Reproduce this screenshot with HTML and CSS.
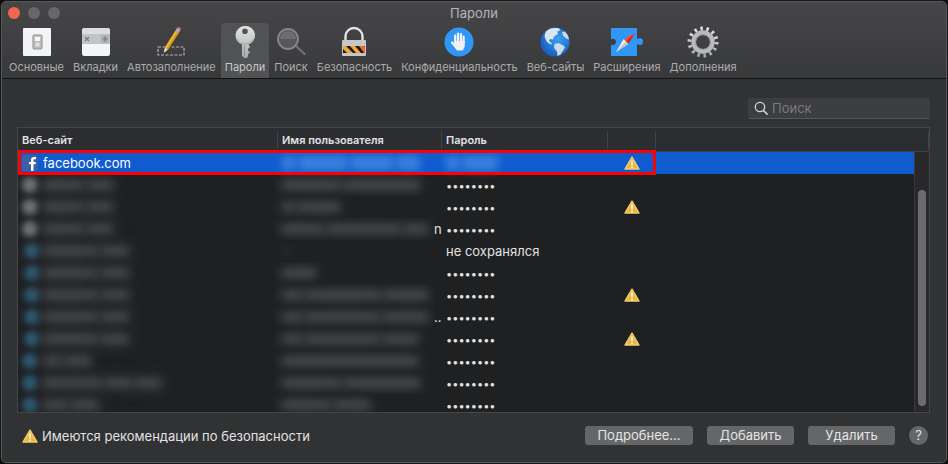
FILE: index.html
```html
<!DOCTYPE html>
<html lang="ru">
<head>
    <meta charset="UTF-8">
    <meta name="viewport" content="width=device-width, initial-scale=1.0">
    <title>Пароли</title>
    <link rel="stylesheet" href="styles.css">
</head>
<body>
    <div class="window">
        <header class="top">
            <div class="titlebar">
                <div class="lights">
                    <button type="button" class="light close" aria-label="Закрыть"></button>
                    <button type="button" class="light" aria-label="Свернуть"></button>
                    <button type="button" class="light" aria-label="Развернуть"></button>
                </div>
                <h1>Пароли</h1>
            </div>
            <nav class="toolbar">
                <button type="button" class="tab">
                    <svg class="icon" viewBox="0 0 32 32">
                        <rect x="2" y="2" width="28" height="28" rx="1" fill="#f3f4f5"/>
                        <rect x="12" y="9" width="9" height="14" rx="1" fill="#c4c4c4" stroke="#8d8d8d"/>
                        <rect x="14" y="11" width="5" height="4" fill="#f6f6f6"/>
                        <rect x="14" y="16" width="5" height="5" fill="#e2e2e2" stroke="#a3a3a3" stroke-width=".6"/>
                    </svg>
                    <span>Основные</span>
                </button>
                <button type="button" class="tab">
                    <svg class="icon" viewBox="0 0 32 32">
                        <rect x="2" y="2" width="28" height="28" rx="2.5" fill="#f4f5f8"/>
                        <path d="M2 8V4.500A2.500 2.500 0 0 1 4.500 2h23A2.500 2.500 0 0 1 30 4.500V8z" fill="#dcdde0"/>
                        <rect x="2" y="8" width="28" height="10" fill="#c2c3c6"/>
                        <rect x="21" y="9" width="8" height="8" fill="#b0b1b4"/>
                        <path d="M5 11l4 4M9 11l-4 4M25 10.500v5M22.500 13h5" stroke="#77787b" stroke-width="1.2" fill="none"/>
                    </svg>
                    <span>Вкладки</span>
                </button>
                <button type="button" class="tab">
                    <svg class="icon" viewBox="0 0 32 32">
                        <rect x="3" y="21" width="26" height="8" fill="none" stroke="#b4b4b4" stroke-width="1.2" stroke-dasharray="3 1.5"/>
                        <path d="M20.500 4.500l3.500 2L13 23.500l-3.200-1.900z" fill="#efb733"/>
                        <path d="M22.500 5.600l1.500.9L13 23.500l-1.400-.9z" fill="#d4961c"/>
                        <path d="M9.800 21.600l3.200 1.900-4.500 4z" fill="#ead9b6"/>
                        <path d="M8.900 25.700l1.200.7-1.600 1.100z" fill="#333"/>
                        <path d="M20.500 4.500l1.400-2.400 3.500 2-1.400 2.400z" fill="#aeb4bd"/>
                        <path d="M21.900 2.100c1.200-2.300 5-.3 3.500 2z" fill="#d9706a"/>
                    </svg>
                    <span>Автозаполнение</span>
                </button>
                <button type="button" class="tab active">
                    <svg class="icon" viewBox="0 0 32 32">
                        <defs>
                            <linearGradient id="metal" x1="0" y1="0" x2="0" y2="1">
                                <stop offset="0" stop-color="#e4e4e4"/>
                                <stop offset="1" stop-color="#a9abad"/>
                            </linearGradient>
                        </defs>
                        <path fill-rule="evenodd" fill="url(#metal)" d="M16 0a9.500 9.500 0 0 0-3 18.500V30l2.500 2H18l1-2v-2l2-1.500-2-2V23l2-2-1.500-2.500A9.500 9.500 0 0 0 16 0zm0 2.500a2.800 2.800 0 1 1 0 5.600 2.800 2.800 0 0 1 0-5.600z"/>
                        <path d="M15.500 19v12" stroke="#8e9092" stroke-width="1"/>
                        <path d="M8 13a9 9 0 0 0 16 0" fill="none" stroke="#9c9ea0" stroke-width=".8"/>
                    </svg>
                    <span>Пароли</span>
                </button>
                <button type="button" class="tab">
                    <svg class="icon" viewBox="0 0 32 32">
                        <path d="M20 19l9.500 9" stroke="#707173" stroke-width="2.4" stroke-linecap="round"/>
                        <circle cx="13" cy="13" r="10" fill="#57585a" stroke="#858688" stroke-width="1.8"/>
                        <path d="M5 13a8 8 0 0 1 16 0z" fill="#6b6c6e"/>
                    </svg>
                    <span>Поиск</span>
                </button>
                <button type="button" class="tab">
                    <svg class="icon" viewBox="0 0 32 32">
                        <path d="M7.500 15v-4.500a8.500 8.500 0 0 1 17 0V15" fill="none" stroke="#e2e3e4" stroke-width="2.4"/>
                        <rect x="4" y="14" width="24" height="16" rx="1" fill="#c5c6c8"/>
                        <rect x="5" y="20" width="22" height="7" fill="#1c1a18"/>
                        <path d="M5 20h3l7 7H9l-4-4z" fill="#f2a63a"/>
                        <path d="M12 20h5l6 7h-5z" fill="#f2a63a"/>
                        <path d="M21 20h5l1 1v6h-1z" fill="#ee6b36"/>
                    </svg>
                    <span>Безопасность</span>
                </button>
                <button type="button" class="tab">
                    <svg class="icon" viewBox="0 0 32 32">
                        <circle cx="16" cy="16" r="14.5" fill="#2f97f5"/>
                        <g stroke="#f4f4f4" stroke-width="2.2" stroke-linecap="round">
                            <path d="M12.200 17V9.500M15 16V7.500M17.900 16V8M20.600 17v-6.500M12 20l-3-3.500"/>
                        </g>
                        <path d="M11 15h10.800v4.500c0 2-1.300 3-2 5h-6c-.5-1.500-2.800-3-2.800-5z" fill="#f0f0f0"/>
                    </svg>
                    <span>Конфиденциальность</span>
                </button>
                <button type="button" class="tab">
                    <svg class="icon" viewBox="0 0 32 32">
                        <defs>
                            <radialGradient id="ocean" cx=".6" cy=".4" r=".6">
                                <stop offset="0" stop-color="#39a0f4"/>
                                <stop offset="1" stop-color="#1c5fc0"/>
                            </radialGradient>
                        </defs>
                        <circle cx="16" cy="16" r="14.5" fill="url(#ocean)"/>
                        <path d="M7 5.500C10 2.500 14 1.500 18 2l3 1-1 2.500-2-.5 1 3-4 2.500-1 3-3-.5-1 2 3 2.500-1 1-4-2.500-2-4c-1-2 0-4.500 1-6.500z" fill="#dbe6ee"/>
                        <path d="M23 6l3-.5 3 4 1 4-3-1-3-3z" fill="#c6dcec"/>
                        <path d="M15.500 18l4-1 5 2.500 1.500 2-2 3-2.500 4-3 1.500-.5-4.500-3-3.500z" fill="#cadbe8"/>
                    </svg>
                    <span>Веб-сайты</span>
                </button>
                <button type="button" class="tab">
                    <svg class="icon" viewBox="0 0 32 32">
                        <path d="M0 2h26v11c1 0 1.500-1 3-1 4 0 4 7 0 7-1.500 0-2-1-3-1v12H0V18.500c1.500 1.500 5 .5 5-2.500s-3.500-4-5-2.500z" fill="#2f97f5"/>
                        <path d="M24 7l-6.600 10.900-4.800-4.800z" fill="#f1503a"/>
                        <path d="M24 7l-6.600 10.900L15 15.500z" fill="#c22c20"/>
                        <path d="M5 26l7.600-12.900 4.800 4.800z" fill="#eceeef"/>
                        <path d="M5 26l10-10.500 2.400 2.400z" fill="#bfc4c9"/>
                    </svg>
                    <span>Расширения</span>
                </button>
                <button type="button" class="tab">
                    <svg class="icon" viewBox="0 0 32 32">
                        <circle cx="16" cy="16" r="13.5" fill="none" stroke="url(#metal)" stroke-width="4" stroke-dasharray="2.4 3.66"/>
                        <circle cx="16" cy="16" r="9.4" fill="none" stroke="#b9babb" stroke-width="4.6"/>
                        <circle cx="16" cy="16" r="7.4" fill="none" stroke="#929394" stroke-width="1"/>
                    </svg>
                    <span>Дополнения</span>
                </button>
            </nav>
        </header>

        <main class="content">
            <label class="search">
                <svg viewBox="0 0 14 14">
                    <circle cx="6" cy="6" r="4.7" fill="none" stroke="#d6d6d7" stroke-width="1.3"/>
                    <path d="M9.500 9.500l3.600 3.600" stroke="#d6d6d7" stroke-width="1.5" stroke-linecap="round"/>
                </svg>
                <input type="search" placeholder="Поиск" aria-label="Поиск">
            </label>

            <div class="list">
                <table>
                    <colgroup>
                        <col class="col-site">
                        <col class="col-user">
                        <col class="col-pass">
                        <col class="col-warn">
                        <col>
                        <col class="col-scroll">
                    </colgroup>
                    <thead>
                        <tr><th>Веб-сайт</th><th>Имя пользователя</th><th>Пароль</th><th></th><th></th><th></th></tr>
                    </thead>
                    <tbody id="rows">
                        <tr class="selected">
                            <td>
                                <div class="site">
                                    <svg class="fb" viewBox="0 0 16 16">
                                        <rect width="16" height="16" rx="2" fill="#3c5fa6"/>
                                        <path d="M9 16V9.300h-2V7h2V5.200C9 3 10.300 2 12.200 2H14v2.300h-1.200c-1 0-1.300.5-1.300 1.300V7h2.400l-.4 2.300h-2V16z" fill="#fff"/>
                                    </svg>
                                    facebook.com
                                </div>
                            </td>
                            <td><div class="masked"><i style="width:14px"></i><i style="width:50px"></i><i style="width:44px"></i><i style="width:24px"></i></div></td>
                            <td><div class="masked"><i style="width:14px"></i><i style="width:36px"></i></div></td>
                            <td class="alert"><svg class="warn" viewBox="0 0 16 14"><use href="#warning"/></svg></td>
                            <td></td>
                            <td></td>
                        </tr>
                    </tbody>
                </table>
                <div class="marker"></div>
                <div class="thumb"></div>
            </div>

            <footer class="bottom">
                <p class="notice">
                    <svg class="warn" viewBox="0 0 16 14">
                        <g id="warning">
                            <path d="M8 1l7 12H1z" fill="#edb73c" stroke="#f3cd74" stroke-width="1.4" stroke-linejoin="round"/>
                            <path d="M8 4.500v4.700M8 10.600v1.500" stroke="#fff" stroke-width="1.5"/>
                        </g>
                    </svg>
                    Имеются рекомендации по безопасности
                </p>
                <button type="button" class="btn wide">Подробнее...</button>
                <button type="button" class="btn">Добавить</button>
                <button type="button" class="btn">Удалить</button>
                <button type="button" class="help" aria-label="Справка">?</button>
            </footer>
        </main>
    </div>

    <script>
        // word widths of the masked site and user name, then the rest of the row
        const rows = [
            { icon: "gray", site: [42, 26], user: [60, 76], tail: "" },
            { icon: "gray", site: [42, 26], user: [14, 42], warn: true },
            { icon: "gray", site: [42, 26], user: [44, 74, 24], tail: "n" },
            { icon: "blue in", site: [56, 28], user: [10], faint: true, pass: "не сохранялся" },
            { icon: "blue in", site: [56, 28], user: [34] },
            { icon: "blue in", site: [56, 28], user: [22, 76, 44], warn: true },
            { icon: "blue in", site: [56, 28], user: [22, 76, 44], tail: ".." },
            { icon: "blue in", site: [56, 28], user: [22, 76, 34], warn: true },
            { icon: "blue", site: [20, 26], user: [136] },
            { icon: "blue", site: [60, 28, 26], user: [60, 76] },
            { icon: "blue", site: [26, 28], user: [50, 36] }
        ];

        const masked = (widths) => widths.map((w) => `<i style="width:${w}px"></i>`).join("");

        document.getElementById("rows").insertAdjacentHTML("beforeend", rows.map((row) => `
            <tr>
                <td><div class="site"><b class="dot ${row.icon}"></b><div class="masked">${masked(row.site)}</div></div></td>
                <td><div class="user"><div class="masked${row.faint ? " faint" : ""}">${masked(row.user)}</div><span>${row.tail || ""}</span></div></td>
                <td>${row.pass || '<span class="dots">••••••••</span>'}</td>
                <td class="alert">${row.warn ? '<svg class="warn" viewBox="0 0 16 14"><use href="#warning"/></svg>' : ""}</td>
                <td></td>
                <td></td>
            </tr>`).join(""));
    </script>
</body>
</html>
```
FILE: styles.css
```css
* {
    box-sizing: border-box;
}
body {
    margin: 0;
    background-color: #0c0c0d;
    color: #e2e2e3;
    font-family: Inter, "Noto Sans", sans-serif;
    font-size: 13px;
}
button {
    font-family: inherit;
    border: none;
    padding: 0;
}
.window {
    display: flex;
    flex-direction: column;
    height: 100vh;
    min-height: 300px;
    padding: 1px;
    background-color: #313234;
    border: 1px solid #161617;
    border-radius: 6px;
    box-shadow: inset 0 0 0 1px #58595b;
    overflow: hidden;
}
.top {
    background: linear-gradient(#464648, #38393b);
    border-bottom: 1px solid #121213;
    border-radius: 5px 5px 0 0;
}
.titlebar {
    display: grid;
    grid-template-columns: 1fr auto 1fr;
    align-items: center;
    height: 21px;
    padding: 0 6px;
}
.titlebar h1 {
    margin: 0;
    font-size: 13px;
    line-height: 20px;
    font-weight: 400;
    color: #b6b6b8;
}
.lights {
    display: flex;
    gap: 8px;
}
.light {
    width: 12px;
    height: 12px;
    border-radius: 50%;
    background-color: #68686b;
}
.light.close {
    background-color: #f2654e;
}
.toolbar {
    display: flex;
    gap: 1px;
    padding: 0 3px;
}
.tab {
    display: flex;
    flex-direction: column;
    align-items: center;
    gap: 1px;
    height: 55px;
    padding: 3px 4px 0;
    background: none;
    border-radius: 4px 4px 0 0;
    color: #acacae;
    font-size: 11px;
    line-height: 16px;
}
.tab.active {
    background-color: #515254;
    color: #c8c8ca;
}
.icon {
    width: 32px;
    height: 32px;
}
.content {
    display: flex;
    flex: 1;
    flex-direction: column;
    min-height: 0;
    padding: 19px 16px 0 15px;
}
.search {
    display: flex;
    align-items: center;
    align-self: flex-end;
    gap: 4px;
    width: 182px;
    height: 21px;
    padding: 0 6px;
    background-color: #3d3e40;
    border-bottom: 1px solid #565759;
    border-radius: 3px;
}
.search svg {
    flex: none;
    width: 14px;
    height: 14px;
}
.search input {
    flex: 1;
    min-width: 0;
    padding: 0;
    background: none;
    border: none;
    outline: none;
    color: #e2e2e3;
    font: inherit;
}
.search input::placeholder {
    color: #7b7b7d;
}
.list {
    position: relative;
    flex: 1;
    min-height: 0;
    margin-top: 8px;
    background-color: #1f2022;
    border: 1px solid #454648;
    overflow: hidden;
}
table {
    width: 100%;
    table-layout: fixed;
    border-collapse: separate;
    border-spacing: 0;
}
.col-site {
    width: 260px;
}
.col-user {
    width: 164px;
}
.col-pass {
    width: 166px;
}
.col-warn {
    width: 48px;
}
.col-scroll {
    width: 15px;
}
th {
    height: 24px;
    padding: 0 4px;
    background: #2b2d31 linear-gradient(#414244, #414244) right center / 1px 18px no-repeat;
    border-bottom: 1px solid #3f4042;
    font-size: 11px;
    font-weight: 600;
    text-align: left;
}
th:nth-child(5) {
    background-image: none;
}
td {
    height: 22px;
    padding: 0 0 0 4px;
    line-height: 20px;
    white-space: nowrap;
}
td.alert {
    padding: 0;
}
td:last-child {
    background-color: #28292b;
    border-left: 1px solid #39393b;
}
.selected td:not(:last-child) {
    background-color: #105ccf;
    color: #fff;
}
.site,
.user {
    display: flex;
    align-items: center;
    gap: 5px;
    height: 20px;
}
.user {
    gap: 0;
}
.user .masked {
    width: 160px;
    margin-left: -8px;
    padding-left: 8px;
    overflow: hidden;
}
.user span {
    width: 8px;
    overflow: hidden;
}
.fb {
    width: 16px;
    height: 16px;
}
.dot {
    width: 16px;
    height: 16px;
    border-radius: 50%;
    background-color: #727375;
    filter: blur(3px);
}
.dot.blue {
    background-color: #2d5870;
}
.dot.in {
    margin: 0 -2px 0 2px;
}
.masked {
    display: flex;
    align-items: center;
    gap: 2px;
    height: 22px;
}
.masked i {
    height: 8px;
    border-radius: 4px;
    background-color: #4b4c4e;
    box-shadow: 0 0 8px 6px rgba(56, 57, 63, 0.4);
    filter: blur(4px);
}
.masked.faint i {
    background-color: #2b2c2e;
    box-shadow: none;
}
.selected .masked i {
    height: 14px;
    background-color: #3f82dc;
    box-shadow: none;
}
.dots {
    font-size: 11px;
}
.warn {
    display: block;
    width: 16px;
    height: 14px;
}
td .warn {
    margin: 0 auto;
}
/* frame round the selected row */
.marker {
    position: absolute;
    top: 22px;
    left: 0;
    width: 638px;
    height: 25px;
    border: 3px solid #fd0002;
}
.thumb {
    position: absolute;
    top: 62px;
    right: 3px;
    bottom: 6px;
    width: 8px;
    border-radius: 4px;
    background-color: #6c6c6f;
}
.bottom {
    display: flex;
    align-items: center;
    gap: 14px;
    height: 49px;
    padding: 0 2px 4px 5px;
}
.notice {
    display: flex;
    align-items: center;
    gap: 4px;
    flex: 1;
    margin: 0;
}
.btn {
    min-width: 87px;
    height: 19px;
    background-color: #656668;
    border-radius: 3px;
    color: #e4e4e5;
    font-size: 13px;
    line-height: 19px;
}
.btn.wide {
    min-width: 108px;
}
.help {
    width: 19px;
    height: 19px;
    border-radius: 50%;
    background-color: #656668;
    color: #e4e4e5;
    font-size: 13px;
    line-height: 19px;
}
```
